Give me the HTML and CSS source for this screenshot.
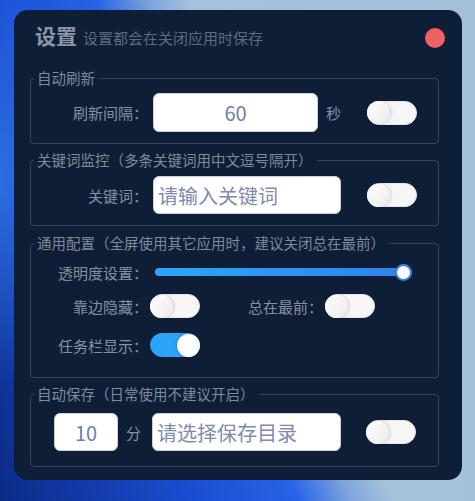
FILE: index.html
```html
<!DOCTYPE html>
<html lang="zh-CN">
  <head>
    <meta charset="UTF-8" />
    <meta name="viewport" content="width=device-width, initial-scale=1.0" />
    <title>设置</title>
    <link rel="stylesheet" href="styles.css">
  </head>
  <body>
    <div class="window">
      <div class="header">
        <h2>设置<span class="subtitle">设置都会在关闭应用时保存</span></h2>
        <span class="close-dot"></span>
      </div>

      <fieldset class="group group-refresh">
        <legend>自动刷新</legend>
        <div class="row">
          <label class="label" for="interval">刷新间隔：</label>
          <input class="field field-interval" type="text" id="interval" value="60" />
          <span class="unit">秒</span>
          <span class="switch"><span class="knob"></span></span>
        </div>
      </fieldset>

      <fieldset class="group group-keyword">
        <legend>关键词监控（多条关键词用中文逗号隔开）</legend>
        <div class="row">
          <label class="label" for="keyword">关键词：</label>
          <input class="field field-keyword" type="text" id="keyword" placeholder="请输入关键词" />
          <span class="switch"><span class="knob"></span></span>
        </div>
      </fieldset>

      <fieldset class="group group-general">
        <legend>通用配置（全屏使用其它应用时，建议关闭总在最前）</legend>
        <div class="row row-opacity">
          <label class="label" for="opacity">透明度设置：</label>
          <input class="slider" type="range" id="opacity" min="0" max="100" value="100" />
        </div>
        <div class="row row-dock">
          <span class="label">靠边隐藏：</span>
          <span class="switch"><span class="knob"></span></span>
          <span class="label label-top">总在最前：</span>
          <span class="switch"><span class="knob"></span></span>
        </div>
        <div class="row row-taskbar">
          <span class="label">任务栏显示：</span>
          <span class="switch on"><span class="knob"></span></span>
        </div>
      </fieldset>

      <fieldset class="group group-save">
        <legend>自动保存（日常使用不建议开启）</legend>
        <div class="row row-save">
          <input class="field field-minutes" type="text" value="10" />
          <span class="unit">分</span>
          <input class="field field-dir" type="text" placeholder="请选择保存目录" />
          <span class="switch"><span class="knob"></span></span>
        </div>
      </fieldset>
    </div>
  </body>
</html>
```

FILE: styles.css
```css
/* Desktop wallpaper behind the window */
body {
  margin: 0;
  height: 501px;
  overflow: hidden;
  font-family: "Noto Sans CJK SC", "Microsoft YaHei", sans-serif;
  background:
    radial-gradient(ellipse 120px 300px at 0 180px, rgba(60, 140, 255, 0.6), transparent 70%),
    linear-gradient(68deg, #0b2a86 0%, #1a4fd4 30%, #2763e6 44%, #7fa6dc 52%, #a6c2db 58%, #a4c0d9 100%);
}

/* Settings window */
.window {
  box-sizing: border-box;
  width: 448px;
  height: 470px;
  margin: 10px 0 0 14px;
  padding: 0 23px 0 16px;
  background: #0f1e37;
  border-radius: 14px;
}

.header {
  display: flex;
  align-items: center;
  justify-content: space-between;
  padding: 14px 0 0 5px;
  height: 24px;
  margin-bottom: 20px;
}

h2 {
  margin: 0;
  font-size: 21px;
  line-height: 24px;
  font-weight: bold;
  color: #8b95a9;
}

.subtitle {
  margin-left: 6px;
  font-size: 15px;
  font-weight: normal;
  color: #5e6a80;
}

.close-dot {
  width: 20px;
  height: 20px;
  margin: 3px -6px 0 0;
  border-radius: 50%;
  background: #ee6262;
}

/* Groups */
.group {
  margin: 0;
  padding: 5px 0 11px;
  border: 1px solid #36425a;
  border-radius: 4px;
}

legend {
  margin-left: 3px;
  padding: 0 4px 0 3px;
  font-size: 14.5px;
  line-height: 20px;
  color: #7f899c;
}

.row {
  display: flex;
  align-items: center;
}

.label {
  width: 117px;
  flex-shrink: 0;
  text-align: right;
  font-size: 15px;
  color: #8690a4;
}

.unit {
  margin-left: 8px;
  font-size: 15px;
  color: #8690a4;
}

/* Inputs */
.field {
  box-sizing: border-box;
  height: 39px;
  padding: 0 4px;
  border: 1px solid #c9ced8;
  border-radius: 6px;
  background: #fff;
  font-family: inherit;
  font-size: 20px;
  color: #6b80b0;
  outline: none;
}

.field::placeholder {
  color: #7e8bae;
}

.field-interval {
  width: 165px;
  margin-left: 5px;
  text-align: center;
}

.group-refresh .switch {
  margin-left: 26px;
}

.group-keyword {
  margin-top: 6px;
  padding-top: 6px;
}

.field-keyword {
  width: 188px;
  height: 38px;
  margin-left: 5px;
}

.group-keyword .switch {
  margin-left: 26px;
}

.group-general {
  margin-top: 7px;
  padding: 7px 0 20px;
}

.row-opacity {
  height: 24px;
}

.slider {
  -webkit-appearance: none;
  appearance: none;
  width: 257px;
  height: 8px;
  margin: 0 0 0 7px;
  border-radius: 4px;
  background: linear-gradient(90deg, #2ba6f8, #2f82f0);
  outline: none;
}

.slider::-webkit-slider-thumb {
  -webkit-appearance: none;
  width: 17px;
  height: 17px;
  border-radius: 50%;
  background: #fff;
  border: 2px solid #2f82f0;
  box-sizing: border-box;
}

.row-dock {
  height: 24px;
  margin-top: 10px;
}

.row-dock .switch,
.row-taskbar .switch {
  margin-left: 2px;
}

.label-top {
  width: 75px;
  margin-left: 48px;
}

.row-taskbar {
  height: 24px;
  margin-top: 15px;
}

.group-save {
  margin-top: 6px;
  padding: 9px 0 15px;
}

.row-save {
  padding-left: 23px;
}

.field-minutes {
  width: 64px;
  height: 38px;
  text-align: center;
}

.field-dir {
  width: 189px;
  height: 38px;
  margin-left: 11px;
}

.group-save .switch {
  margin-left: 25px;
}

/* Toggle switches */
.switch {
  box-sizing: border-box;
  display: flex;
  align-items: center;
  width: 50px;
  height: 24px;
  flex-shrink: 0;
  border-radius: 12px;
  background: #f6f6f7;
  border: 1px solid #e4e6ea;
}

.knob {
  width: 23px;
  height: 23px;
  margin-left: -1px;
  border-radius: 50%;
  background: linear-gradient(135deg, #ffffff, #ebebed);
  box-shadow: 1px 0 3px rgba(0, 0, 0, 0.18);
}

.switch.on {
  justify-content: flex-end;
  background: #2ba4f7;
  border-color: #2ba4f7;
}

.switch.on .knob {
  margin: 0 -1px 0 0;
  background: #fff;
  box-shadow: -1px 0 3px rgba(0, 0, 0, 0.15);
}
```
